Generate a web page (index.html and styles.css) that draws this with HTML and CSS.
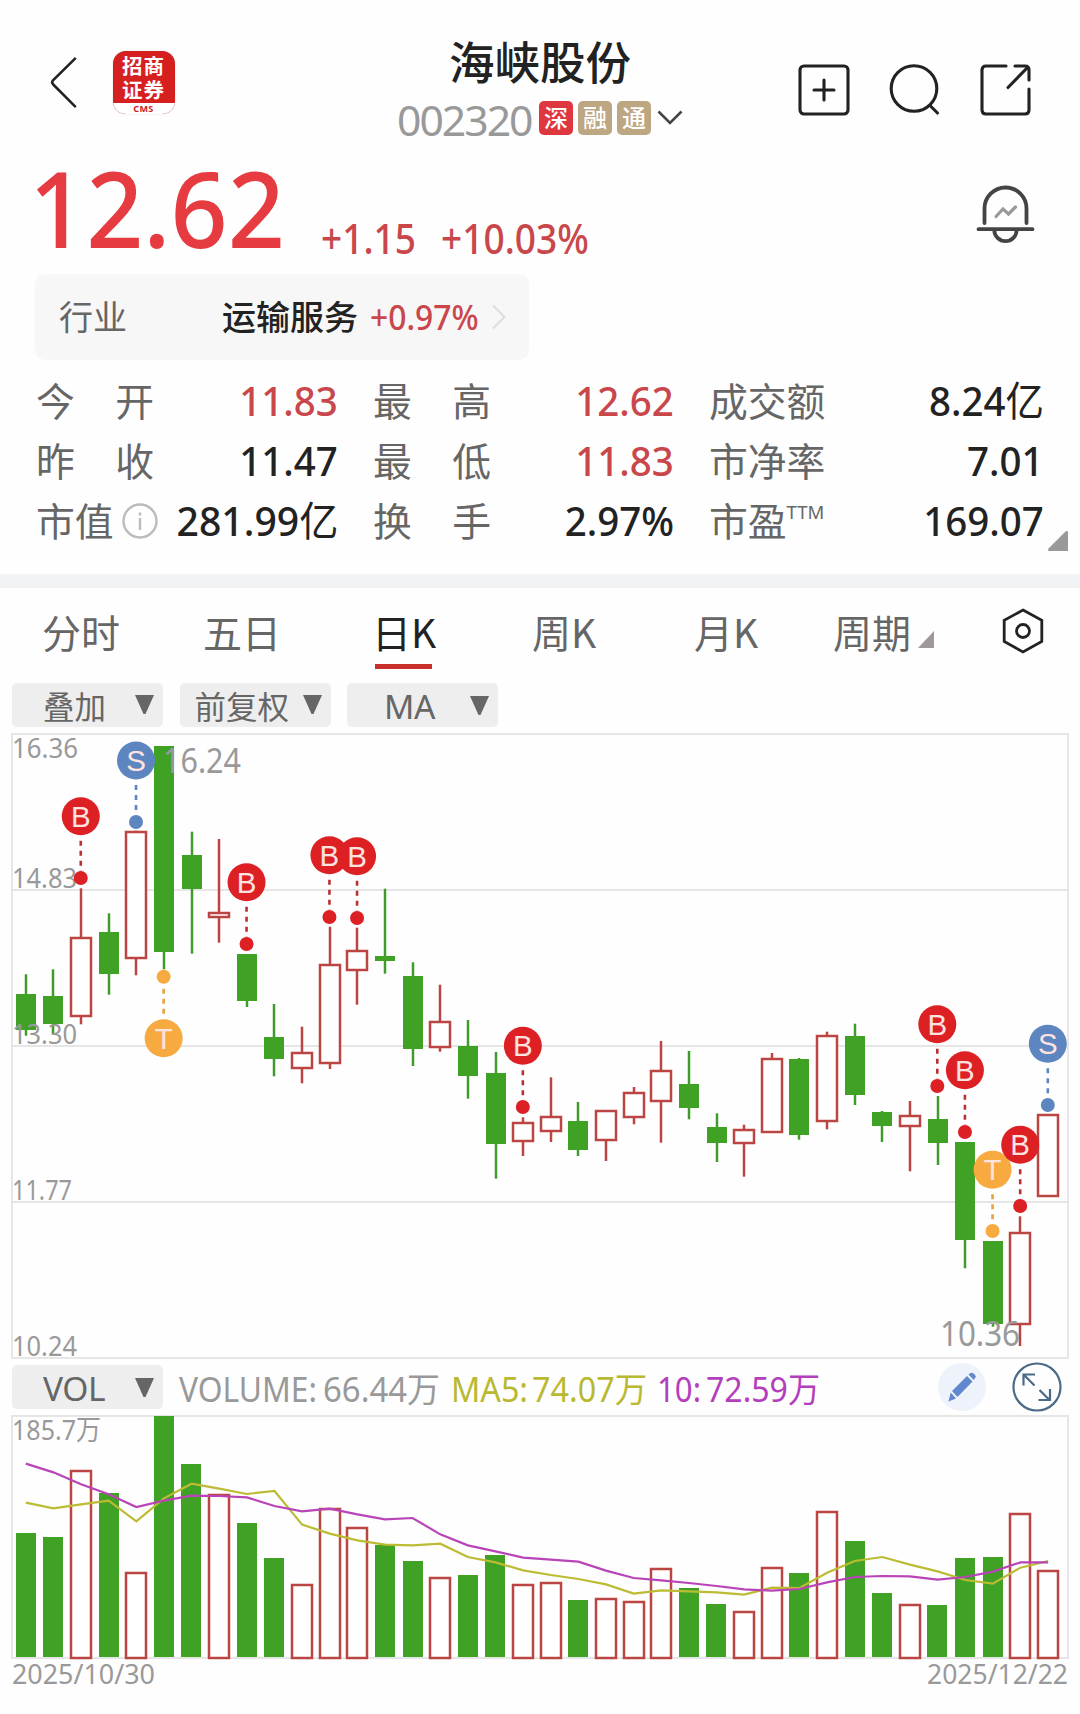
FILE: index.html
```html
<!DOCTYPE html>
<html lang="zh-CN">
<head>
<meta charset="utf-8">
<title>海峡股份 002320</title>
<link rel="stylesheet" href="styles.css">
</head>
<body>
<main class="page">
  <header class="topbar">
    <svg class="back" viewBox="0 0 28 54"><path d="M26 2 2.8 24.8Q1 26.8 2.8 28.8L26 52"/></svg>
    <div class="broker"><div class="broker-name">招商</div><div class="broker-name">证券</div><div class="broker-code">CMS</div></div>
    <div class="stock">
      <h1 class="stock-name">海峡股份</h1>
      <div class="stock-meta">
        <span class="stock-code">002320</span>
        <span class="tag tag-red">深</span><span class="tag">融</span><span class="tag">通</span>
        <svg class="caret" viewBox="0 0 26 16"><path d="M1.5 1.5 13 13 24.500 1.500"/></svg>
      </div>
    </div>
    <div class="actions">
      <svg viewBox="0 0 56 56"><rect x="4" y="4" width="48" height="48" rx="4"/><path d="M28 18v20M18 28h20"/></svg>
      <svg viewBox="0 0 56 56"><circle cx="27" cy="26.500" r="22.800"/><path d="M43 43.500 50.500 51"/></svg>
      <svg viewBox="0 0 56 56"><path d="M28 4H8Q4 4 4 8V48Q4 52 8 52H47Q51 52 51 48V27M37 4H47Q51 4 51 8V18M50 5 30 25.500"/></svg>
    </div>
  </header>

  <section class="quote">
    <span class="price">12.62</span>
    <span class="change">+1.15</span>
    <span class="change-pct">+10.03%</span>
    <svg class="bell" viewBox="0 0 60 62"><path d="M8.500 39V24.500a21 21 0 0 1 42 0V39M2.500 45.200h54M18.300 46a11.200 11.200 0 0 0 22.400 0"/><path class="bell-trend" d="M20 32.500 27 25 32.500 30 39.500 23"/></svg>
  </section>

  <section class="industry">
    <span class="industry-label">行业</span>
    <span class="industry-name">运输服务</span>
    <span class="industry-pct">+0.97%</span>
    <svg class="industry-arrow" viewBox="0 0 16 26"><path d="M2 1.500 13.500 13 2 24.500"/></svg>
  </section>

  <section class="stats">
    <div class="stat"><span class="label"><i>今</i><i>开</i></span><span class="value up">11.83</span></div>
    <div class="stat"><span class="label"><i>最</i><i>高</i></span><span class="value up">12.62</span></div>
    <div class="stat"><span class="label">成交额</span><span class="value">8.24<i class="unit">亿</i></span></div>
    <div class="stat"><span class="label"><i>昨</i><i>收</i></span><span class="value">11.47</span></div>
    <div class="stat"><span class="label"><i>最</i><i>低</i></span><span class="value up">11.83</span></div>
    <div class="stat"><span class="label">市净率</span><span class="value">7.01</span></div>
    <div class="stat"><span class="label"><i>市值</i><svg class="info" viewBox="0 0 36 36"><circle cx="18" cy="18" r="16.500"/><path d="M18 15v12M18 9.500v3"/></svg></span><span class="value wide-value">281.99<i class="unit">亿</i></span></div>
    <div class="stat"><span class="label"><i>换</i><i>手</i></span><span class="value">2.97%</span></div>
    <div class="stat"><span class="label">市盈<small>TTM</small></span><span class="value">169.07</span></div>
    <svg class="expand-corner" viewBox="0 0 20 20"><path d="M20 1V20H1Q-1 19 1 17L17 1Q19-1 20 1Z"/></svg>
  </section>

  <div class="divider"></div>

  <nav class="tabs">
    <span class="tab t1">分时</span>
    <span class="tab t2">五日</span>
    <span class="tab t3 active">日K</span>
    <span class="tab t4">周K</span>
    <span class="tab t5">月K</span>
    <span class="tab t6">周期<svg class="tab-corner" viewBox="0 0 16 17"><path d="M16 0V17H0Z"/></svg></span>
    <svg class="settings" viewBox="0 0 42 46"><path d="M21 2 39.800 12.300V33.500L21 44 2.200 33.500V12.300Z"/><circle cx="21" cy="23" r="6.500"/></svg>
  </nav>

  <div class="selectors">
    <button class="select">叠加<svg viewBox="0 0 20 20"><path d="M0 0H19L10.500 19H8.500Z"/></svg></button>
    <button class="select wide">前复权<svg viewBox="0 0 20 20"><path d="M0 0H19L10.500 19H8.500Z"/></svg></button>
    <button class="select latin">MA<svg viewBox="0 0 20 20"><path d="M0 0H19L10.500 19H8.500Z"/></svg></button>
  </div>

  <svg class="kline" viewBox="0 727 1080 635">
    <path class="grid" d="M12 734H1068V1358H12ZM12 890H1068M12 1046H1068M12 1202H1068"/>
    <g id="candles"></g>
    <g class="axis">
      <text x="12" y="758" textLength="66" lengthAdjust="spacingAndGlyphs">16.36</text>
      <text x="12" y="888" textLength="65" lengthAdjust="spacingAndGlyphs">14.83</text>
      <text x="12" y="1044" textLength="65" lengthAdjust="spacingAndGlyphs">13.30</text>
      <text x="12" y="1200" textLength="60" lengthAdjust="spacingAndGlyphs">11.77</text>
      <text x="12" y="1356" textLength="65" lengthAdjust="spacingAndGlyphs">10.24</text>
      <text class="peak" x="163" y="773" textLength="78" lengthAdjust="spacingAndGlyphs">16.24</text>
      <text class="peak" x="940" y="1346" textLength="80" lengthAdjust="spacingAndGlyphs">10.36</text>
    </g>
    <g id="markers"></g>
  </svg>

  <div class="legend">
    <button class="select latin">VOL<svg viewBox="0 0 20 20"><path d="M0 0H19L10.500 19H8.500Z"/></svg></button>
    <svg class="legend-text" viewBox="170 0 680 50">
      <text class="volume" x="179" y="39.500" textLength="138" lengthAdjust="spacingAndGlyphs">VOLUME:</text>
      <text class="volume" x="323" y="39.500" textLength="117" lengthAdjust="spacingAndGlyphs">66.44万</text>
      <text class="ma5" x="451" y="39.500" textLength="77" lengthAdjust="spacingAndGlyphs">MA5:</text>
      <text class="ma5" x="532" y="39.500" textLength="115" lengthAdjust="spacingAndGlyphs">74.07万</text>
      <text class="ma10" x="657" y="39.500" textLength="44" lengthAdjust="spacingAndGlyphs">10:</text>
      <text class="ma10" x="706" y="39.500" textLength="114" lengthAdjust="spacingAndGlyphs">72.59万</text>
    </svg>
    <svg class="draw" viewBox="0 0 48 48"><circle cx="24" cy="24" r="24"/><path d="M10.500 38.500 12.700 29.500 18 35.500ZM14 28 29 13 34.500 18.500 19.500 34ZM30.500 11.500 33 9.800Q35 9.500 36.500 11.300L38 13.500 35.800 17Z"/></svg>
    <svg class="fullscreen" viewBox="0 0 50 50"><circle cx="25" cy="25" r="23.500"/><path d="M11.500 23.500V12.500H23M12 13 22.500 23.500M27.500 28 37.500 38M38 27V38H26.500"/></svg>
  </div>

  <svg class="volume-chart" viewBox="0 1412 1080 252">
    <path class="grid" d="M12 1416H1068V1658H12Z"/>
    <g id="volumes"></g>
    <text class="axis-volume" x="12" y="1440" textLength="89" lengthAdjust="spacingAndGlyphs">185.7万</text>
    <polyline id="ma5" class="line-ma5"/>
    <polyline id="ma10" class="line-ma10"/>
  </svg>
  <svg class="dates" viewBox="0 1664 1080 50">
    <text x="12" y="1684" textLength="143" lengthAdjust="spacingAndGlyphs">2025/10/30</text>
    <text x="927" y="1684" textLength="141" lengthAdjust="spacingAndGlyphs">2025/12/22</text>
  </svg>
</main>
<script src="chart.js"></script>
</body>
</html>
```
FILE: styles.css
```css
* { box-sizing: border-box; }
body { margin: 0; background: #fefefe; font-family: "Noto Sans", "Noto Sans CJK SC", sans-serif; color: #222; }
.page { width: 1080px; height: 1714px; display: flex; flex-direction: column; overflow: hidden; }
svg { display: block; flex: none; fill: none; overflow: visible; }
i { font-style: normal; }

.topbar { height: 160px; display: flex; align-items: flex-start; flex: none; }
.back { width: 28px; height: 53px; margin: 56px 0 0 49.500px; stroke: #222; stroke-width: 2.600; }
.broker { width: 62px; height: 63px; margin: 51px 0 0 35px; border-radius: 13px; overflow: hidden; background: #d6201f; display: flex; flex-direction: column; box-shadow: 0 0 1px #999; padding-top: 2px; }
.broker-name { height: 24px; color: #fff; text-align: center; font: 700 20.500px/24px "Noto Sans CJK SC", sans-serif; letter-spacing: 1px; }
.broker-code { height: 13px; margin-top: 2px; background: #fff; color: #c22; text-align: center; font: 700 9px/11px "Noto Sans", sans-serif; letter-spacing: .4px; flex: none; }
.stock { width: 330px; margin-left: 200.500px; padding-top: 33px; display: flex; flex-direction: column; align-items: center; }
.stock-name { margin: 0; font: 500 45.500px/54px "Noto Sans CJK SC", sans-serif; white-space: nowrap; }
.stock-meta { display: flex; align-items: center; width: 330px; padding-left: 22px; height: 62px; }
.stock-code { width: 142px; padding-top: 3px; font-size: 42.700px; line-height: 60px; letter-spacing: -2px; color: #999; }
.tag { width: 34px; height: 34px; margin-right: 5px; border-radius: 5px; background: #bda682; color: #fff; font: 500 24px/32px "Noto Sans CJK SC", sans-serif; text-align: center; }
.tag-red { background: #df3740; }
.caret { width: 26px; height: 16px; margin-left: 1px; stroke: #444; stroke-width: 2.600; }
.actions { display: flex; gap: 35px; margin: 61.500px 0 0 91px; }
.actions svg { width: 56px; height: 56px; stroke: #222; stroke-width: 3.100; stroke-linecap: round; }

.quote { height: 114px; display: flex; flex: none; align-items: flex-start; color: #c9474b; }
.price { width: 285px; margin-left: 29px; font-size: 106px; font-weight: 500; line-height: 94px; color: #e63b40; transform: scaleX(.943); transform-origin: left; }
.change, .change-pct { margin-top: 52.500px; font-size: 41px; font-weight: 500; line-height: 50px; transform: scaleX(.905); transform-origin: left; }
.change { width: 120px; margin-left: 7px; }
.change-pct { width: 180px; }
.bell { width: 60px; height: 62px; margin: 24px 0 0 355px; stroke: #444; stroke-width: 3.800; stroke-linecap: round; }
.bell .bell-trend { stroke: #999; stroke-width: 3.200; }

.industry { width: 494px; height: 86px; margin-left: 35px; padding-left: 24px; border-radius: 10px; background: #f7f7f7; display: flex; align-items: center; flex: none; }
.industry-label { width: 163px; margin-top: -4px; font-size: 34px; color: #666; }
.industry-name { width: 148px; margin-top: -4px; font-size: 34px; font-weight: 500; }
.industry-pct { width: 121px; margin-top: -2px; font-size: 35px; font-weight: 500; color: #c9474b; transform: scaleX(.91); transform-origin: left; }
.industry-arrow { width: 16px; height: 26px; stroke: #ddd; stroke-width: 2; }

.stats { height: 214px; padding: 11px 37px 0 36px; display: grid; grid-template-columns: 337px 336px 335px; grid-auto-rows: 60px; position: relative; flex: none; }
.stat { display: flex; justify-content: space-between; align-items: center; }
.stat:nth-child(3n+1), .stat:nth-child(3n+2) { padding-right: 35px; }
.label { min-width: 118px; margin-top: -5px; display: flex; justify-content: space-between; align-items: center; font: 400 38.800px/58px "Noto Sans CJK SC", sans-serif; color: #666; }
.label small { font: 400 18.500px/20px "Noto Sans", sans-serif; margin-bottom: 13px; flex: 1; }
.info { width: 36px; height: 36px; margin: 4px -4px 0 3px; stroke: #bbb; stroke-width: 2.400; }
.value { font-size: 40.500px; font-weight: 500; line-height: 58px; white-space: nowrap; transform: scaleX(.95); transform-origin: right; }
.value.wide-value { transform: scaleX(.967); }
.unit { font-weight: 400; }
.up { color: #c9474b; }
.expand-corner { position: absolute; right: 12px; bottom: 23px; width: 20px; height: 20px; fill: #999; }

.divider { height: 14px; background: #f1f3f5; flex: none; }

.tabs { height: 95px; display: flex; flex: none; align-items: flex-start; }
.tab { height: 81px; display: flex; align-items: flex-start; font: 400 39px/86px "Noto Sans CJK SC", sans-serif; color: #666; white-space: nowrap; }
.t1 { margin-left: 42px; width: 161px; }
.t2 { width: 169px; }
.t3 { width: 62px; }
.t4 { margin-left: 98px; width: 162px; }
.t5 { width: 139px; }
.t6 { width: 169px; }
.active { color: #222; border-bottom: 5px solid #c9302c; width: 57px; margin: 0 2px 0 3px; text-indent: -3px; }
.tab-corner { width: 16px; height: 17px; margin: 43px 0 0 7px; fill: #a09898; }
.settings { width: 42px; height: 46px; margin-top: 20px; stroke: #222; stroke-width: 2.800; }

.selectors { height: 44px; padding-left: 12px; display: flex; gap: 16.500px; flex: none; }
.select { width: 151px; height: 44px; padding: 0 8px 0 31px; border: 0; border-radius: 5px; background: #eee; display: flex; justify-content: space-between; align-items: center; font: 400 31.500px/44px "Noto Sans CJK SC", sans-serif; color: #666; }
.select svg { width: 20px; height: 20px; fill: #666; }
.select.wide { padding-left: 15px; }
.select.latin { padding-top: 2px; font: 400 33.500px/42px "Noto Sans", sans-serif; letter-spacing: -.5px; }
.selectors .latin { padding-left: 37px; }

.kline { width: 1080px; height: 635px; }
.grid { stroke: #e6e6e6; stroke-width: 2; }
.axis text, .dates text, .axis-volume { fill: #999; font-size: 28px; }
.axis .peak { font-size: 34px; }
.candle-down { fill: #3fa224; }
.candle-up { fill: #fff; stroke: #bb4542; stroke-width: 2.500; }
.wick-down { stroke: #3f9c2c; stroke-width: 2.500; }
.wick-up { stroke: #bb4542; stroke-width: 2.500; }
.marker-line { stroke-width: 2.600; stroke-dasharray: 5 5; }
.marker-letter { font: 400 29.500px "Liberation Sans", sans-serif; text-anchor: middle; fill: #fde3e0; }
.marker-b { fill: #dc2023; stroke: #b83033; }
.marker-s { fill: #5d86c0; stroke: #5d86c0; }
.marker-t { fill: #f6aa40; stroke: #e8a23d; }
circle.marker-b, circle.marker-s, circle.marker-t { stroke: none; }

.legend { height: 50px; padding-left: 12px; display: flex; align-items: center; flex: none; }
.legend-text { width: 680px; height: 50px; margin-left: 7px; font-size: 34px; }
.volume { fill: #999; }
.ma5 { fill: #b9b931; }
.ma10 { fill: #b43fbc; }
.draw { width: 48px; height: 48px; margin-left: 88px; }
.draw circle { fill: #edf2fb; }
.draw path { fill: #6188cf; }
.fullscreen { width: 50px; height: 50px; margin-left: 26px; stroke: #4b6a88; stroke-width: 2.200; }

.volume-chart { width: 1080px; height: 252px; }
.line-ma5 { stroke: #bcbc34; stroke-width: 2.200; }
.line-ma10 { stroke: #b844b8; stroke-width: 2.200; }
.dates { width: 1080px; height: 50px; }
```
FILE: chart.js
```js
// Each candle: direction, wick top, body top, body bottom, wick bottom.
const candles = [
  ["d",974.3,994,1030,1035.7],["d",969.3,996,1024,1034],["u",888.3,936.7,1016.7,1024.3],
  ["d",913.3,932,974,994.7],["u",830.7,830.7,959.3,975.3],["d",746,746,952,969.3],
  ["d",831.7,855,888.7,953.7],["u",839,912.3,917.7,942.7],["d",954,954,1000.7,1007],
  ["d",1004,1037,1058.7,1076.3],["u",1026.7,1052.3,1069.3,1083.3],["u",926.7,964.3,1064.3,1069],
  ["u",927.7,950.3,971.3,1004.7],["d",888.7,956,961,973.7],["d",962.3,975.7,1049,1066],
  ["u",984.7,1021.3,1048,1051.7],["d",1020,1046,1076,1098.7],["d",1052,1072.7,1143.7,1178.7],
  ["u",1117.3,1122.3,1141.7,1156],["u",1077.3,1116.3,1131.7,1142],["d",1102,1120.7,1149.7,1156],
  ["u",1110.3,1110.3,1140.7,1161],["u",1087,1092.3,1118,1124.3],["u",1041,1069.7,1101.7,1142.7],
  ["d",1051,1084,1107.7,1119.3],["d",1113.3,1127,1142.7,1162],["u",1124.7,1129,1143.7,1176.7],
  ["u",1053,1058.3,1132.7,1132.7],["d",1058,1059.3,1134.7,1139.7],["u",1031.7,1035,1121.7,1129.3],
  ["d",1023.7,1036,1095,1105],["d",1111,1112.3,1125.7,1142],["u",1101,1115.3,1126.7,1171.3],
  ["d",1096,1118.7,1142.7,1165],["d",1142.3,1142.3,1240.3,1268.3],["d",1241,1241,1323.7,1326.7],
  ["u",1216.3,1232,1325.3,1346],["u",1114.3,1114.3,1196.7,1196.7]
];
// Trade markers: candle index, letter, dot position, badge position.
const markers = [
  [2,"B",878,816.3],[4,"S",822,760.5],[5,"T",976.7,1038.3],[8,"B",944,882.3],
  [11,"B",917,855.3],[12,"B",918,856.3],[18,"B",1107,1045.7],[33,"B",1086,1024.3],
  [34,"B",1132,1070.3],[35,"T",1231,1169.7],[36,"B",1206,1144.7],[37,"S",1105,1043.7]
];
const volumeTops = [549,561,360,429,666,198,342,433,519,624,703,473,530,585,633,680,675,615,703,
  695,750,745,753,654,714,762,782,650,669,484,573,729,763,765,624,621,490,661];
const ma5 = [458,475,463,452,514,445,401,416,432,423,524,551,571,584,586,581,621,637,661,
  675,687,703,731,721,724,727,734,713,714,668,633,621,644,664,690,701,653,633];
const ma10 = [341,367,403,433,471,452,437,438,442,468,484,476,493,508,504,553,586,604,623,
  629,635,662,684,691,699,708,718,722,717,697,681,678,679,689,681,665,637,637];

const x = i => 25.8 + i * 27.63;
const snap = Math.round;
const vy = v => 1350 + v / 3;
const body = (dir, cx, top, bottom) => {
  top = snap(top); bottom = snap(bottom);
  return dir === "d"
    ? `<rect class="candle-down" x="${cx - 10}" y="${top}" width="20" height="${bottom - top}"/>`
    : `<rect class="candle-up" x="${cx - 10}" y="${top + 1}" width="20" height="${bottom - top - 2}"/>`;
};

document.getElementById("candles").innerHTML = candles.map(([dir, high, top, bottom, low], i) => {
  const cx = snap(x(i));
  return `<path class="wick-${dir === "d" ? "down" : "up"}" d="M${cx} ${high}V${low}"/>` + body(dir, cx, top, bottom);
}).join("");

document.getElementById("markers").innerHTML = markers.map(([i, letter, dot, badge]) => {
  const cx = x(i) - 0.3, dir = dot > badge ? 1 : -1, kind = "marker-" + letter.toLowerCase();
  return `<path class="marker-line ${kind}" d="M${cx} ${badge + dir * 24.5}V${dot - dir * 7}"/>` +
    `<circle class="${kind}" cx="${cx}" cy="${dot}" r="7"/>` +
    `<circle class="${kind}" cx="${cx}" cy="${badge}" r="19"/>` +
    `<text class="marker-letter" x="${cx}" y="${badge + 10.6}">${letter}</text>`;
}).join("");

document.getElementById("volumes").innerHTML = volumeTops.map((v, i) =>
  body(candles[i][0], snap(x(i) - 0.1), vy(v), candles[i][0] === "d" ? 1657 : 1659)
).join("");
const points = values => values.map((v, i) => `${x(i)},${vy(v)}`).join(" ");
document.getElementById("ma5").setAttribute("points", points(ma5));
document.getElementById("ma10").setAttribute("points", points(ma10));
```
